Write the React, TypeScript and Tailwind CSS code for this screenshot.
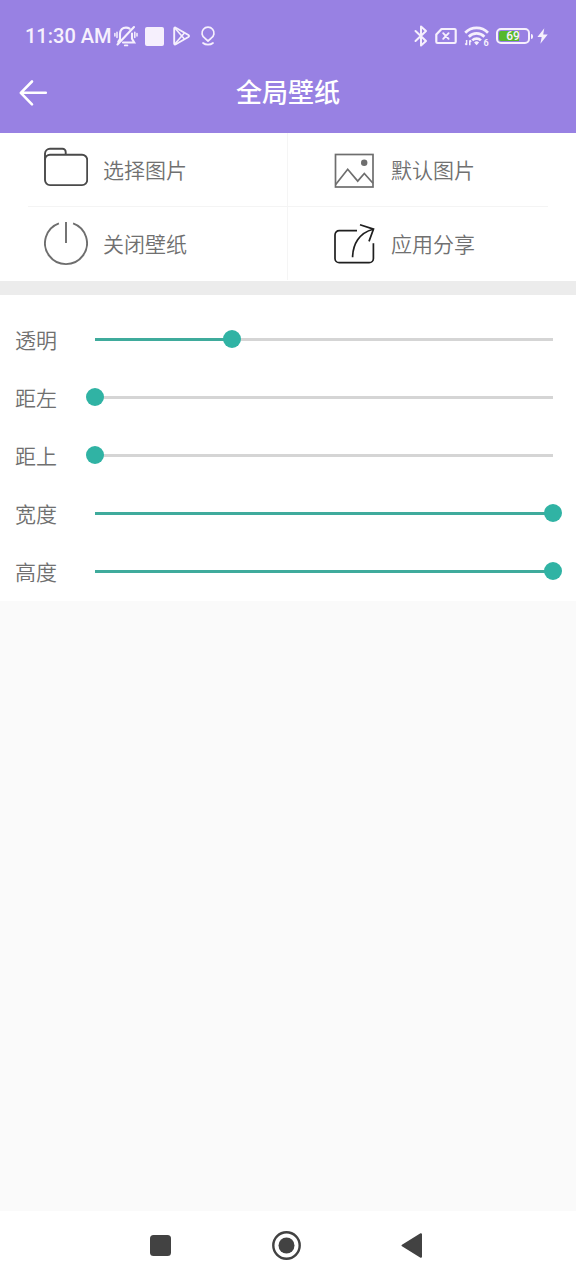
import { useState } from "react";
import type { ReactNode } from "react";

const FONT = "font-['Noto_Sans_CJK_SC','Noto_Sans',sans-serif]";

function StatusBar() {
  return (
    <div className="flex h-[53px] items-center justify-between pt-[19px] pr-7 pl-[25px] text-[#f6f0fd]">
      <div className="flex items-center">
        <span className="mr-[3px] font-[Roboto,sans-serif] text-[20px] leading-6 font-medium">11:30 AM</span>
        <svg width="24" height="24" viewBox="0 0 24 24" fill="none" stroke="currentColor" strokeWidth="2.100" strokeLinecap="round" aria-hidden="true">
          <path d="M6 15.500V10c0-4 2.400-6.400 6-6.400 1.400 0 2.600.4 3.600 1.100M18 9.500v5.300l2.200 3.700H9M5.800 15.400l-1.600 2.400" />
          <path d="M3.500 20.500L20 3" />
          <path d="M10.800 21.400h2.600" strokeWidth="1.800" />
          <path d="M3 8.200v5.200M.9 9.500v2.600M20.800 8.200v5.200M23 9.500v2.600" strokeWidth="1.500" />
        </svg>
        <span className="ml-[7px] block size-[19px] rounded-[2px] bg-[#f6f0fd]" />
        <svg className="ml-[9px]" width="17" height="20" viewBox="0 0 17 20" fill="none" stroke="currentColor" strokeWidth="1.900" strokeLinejoin="round" aria-hidden="true">
          <path d="M1.200 2.600v14.800c0 1 .8 1.400 1.600.9l12.600-7.300c.8-.5.8-1.500 0-2L2.800 1.700c-.8-.5-1.600 0-1.600.9z" />
          <path d="M1.600 1.800l9.800 11.200M1.600 18.200l9.800-11.200" strokeWidth="1.600" />
        </svg>
        <svg className="ml-[10px]" width="16" height="20" viewBox="0 0 16 20" fill="none" stroke="currentColor" strokeWidth="1.700" strokeLinecap="round" strokeLinejoin="round" aria-hidden="true">
          <path d="M8 15l-3-2.700a6 6 0 1 1 6 0z" />
          <path d="M3 17c1.400 1.200 3 1.700 5 1.700s3.600-.5 5-1.700" />
        </svg>
      </div>
      <div className="flex items-center">
        <svg width="14" height="22" viewBox="0 0 14 22" fill="none" stroke="currentColor" strokeWidth="2" strokeLinejoin="round" strokeLinecap="round" aria-hidden="true">
          <path d="M1.500 6l10.500 10-5 4.500v-19L12 6 1.500 16" />
        </svg>
        <svg className="ml-[7px]" width="22" height="18" viewBox="0 0 22 18" fill="none" stroke="currentColor" strokeWidth="2.200" strokeLinejoin="round" strokeLinecap="round" aria-hidden="true">
          <path d="M6.500 2H19.500a1.200 1.200 0 0 1 1.200 1.200v11.600a1.200 1.200 0 0 1-1.200 1.200H2.500a1.200 1.200 0 0 1-1.200-1.200V7.500z" />
          <path d="M8.200 6.200l5.400 5.600M13.600 6.200l-5.400 5.600" strokeWidth="1.900" />
        </svg>
        <svg className="ml-[7px]" width="26" height="22" viewBox="0 0 26 22" fill="none" stroke="currentColor" strokeWidth="2.700" aria-hidden="true">
          <path d="M1.200 7.700a16 16 0 0 1 22.800 0" />
          <path d="M4.800 11.700a11 11 0 0 1 15.600 0" />
          <path d="M8.300 15.400a6 6 0 0 1 8.600 0" />
          <path d="M12.600 20.200l-2.500-2.700a3.500 3.500 0 0 1 5 0z" fill="currentColor" stroke="none" />
          <path d="M2.600 15v5M1.200 18.500l1.400 1.500M5.800 20.300v-5M7.200 16.800l-1.400-1.500" strokeWidth="1.500" />
          <text x="19.500" y="21" fill="currentColor" stroke="none" fontSize="9" fontWeight="700" fontFamily="Roboto, sans-serif">6</text>
        </svg>
        <div className="ml-[6px] flex items-center gap-px">
          <div className="flex h-4 w-[34px] items-center justify-center rounded-[5px] border-2 border-current bg-linear-to-r from-[#56b82c] from-69% to-transparent to-69% bg-clip-content p-px">
            <span className="font-[Roboto,sans-serif] text-[12px] leading-3 font-medium">69</span>
          </div>
          <span className="block h-[5px] w-[2px] rounded-r-[2px] bg-current" />
        </div>
        <svg className="ml-1" width="11" height="16" viewBox="0 0 11 16" fill="currentColor" aria-hidden="true">
          <path d="M7.300.3L.4 9h4.300L3.400 15.700 10.700 6.600H6.200z" />
        </svg>
      </div>
    </div>
  );
}

function Header() {
  return (
    <header className="bg-[#9881e3]">
      <StatusBar />
      <div className="grid h-20 grid-cols-[64px_1fr_64px] items-center">
        <button type="button" aria-label="返回" className="flex h-12 items-center pl-[18px] text-white">
          <svg width="30" height="28" viewBox="0 0 30 28" fill="none" stroke="currentColor" strokeWidth="2.600" strokeLinecap="round" strokeLinejoin="round" aria-hidden="true">
            <path d="M14 2.500L2.800 13.800 14 25.300M3.500 13.800H27.800" />
          </svg>
        </button>
        <h1 className="pb-1 text-center text-[26px] leading-9 font-medium text-white">全局壁纸</h1>
      </div>
    </header>
  );
}

function FolderIcon() {
  return (
    <g stroke="#4a4a4a" strokeWidth="1.900">
      <path d="M1 13V6.500a5 5 0 0 1 5-4.700h12.500a3.200 3.200 0 0 1 3.200 3.200v2.700" />
      <path d="M1 12.700a5 5 0 0 1 5-5h32a5.200 5.200 0 0 1 5.200 5.200v20a5.200 5.200 0 0 1-5.200 5.200H6a5 5 0 0 1-5-5z" />
    </g>
  );
}

function PictureIcon() {
  return (
    <g stroke="#6e6e6e" strokeWidth="1.700">
      <rect x="3.500" y="7.500" width="37.500" height="32.500" />
      <path d="M3.700 37.500L15.700 22.300l10 11.800 6.600-7.600L41 36.300" />
      <circle cx="32.200" cy="15.800" r="3.200" fill="#6e6e6e" stroke="none" />
    </g>
  );
}

function PowerIcon() {
  return (
    <g stroke="#6e6e6e" strokeWidth="1.900">
      <path d="M14.900 2.400a21 21 0 1 0 14.200 0" />
      <path d="M22 1v21" />
    </g>
  );
}

function ShareIcon() {
  return (
    <g stroke="#1f1f1f" strokeWidth="1.700">
      <path d="M25 9.700H7.200A4.200 4.200 0 0 0 3 13.900v23.600a4.200 4.200 0 0 0 4.200 4.200h30a4.200 4.200 0 0 0 4.200-4.200V22.300" />
      <path d="M20.600 36.300C20.800 23.500 27 11.800 41.300 8.200" />
      <path d="M28 3.800l13.500 4.300L37 20.400" />
    </g>
  );
}

function ActionButton({ label, children }: { label: string; children: ReactNode }) {
  return (
    <button type="button" className="flex h-[73px] items-center gap-[15px] pl-[44px] text-[21px] leading-8 font-[350] text-[#707070]">
      <svg width="44" height="45" viewBox="0 0 44 45" fill="none" aria-hidden="true">
        {children}
      </svg>
      <span className="pb-px">{label}</span>
    </button>
  );
}

function Actions() {
  return (
    <section className="bg-white">
      <div className="grid grid-cols-2 divide-x divide-[#f5f5f5]">
        <ActionButton label="选择图片"><FolderIcon /></ActionButton>
        <ActionButton label="默认图片"><PictureIcon /></ActionButton>
      </div>
      <hr className="mx-7 border-[#f4f4f4]" />
      <div className="grid grid-cols-2 divide-x divide-[#f5f5f5] pb-px">
        <ActionButton label="关闭壁纸"><PowerIcon /></ActionButton>
        <ActionButton label="应用分享"><ShareIcon /></ActionButton>
      </div>
    </section>
  );
}

function SliderRow({ id, label, initial }: { id: string; label: string; initial: number }) {
  const [value, setValue] = useState(initial);
  const stop = `calc(9px + (100% - 18px) * ${value / 100})`;
  return (
    <div className="flex h-[58px] items-center pr-[14px] pl-[15px]">
      <label htmlFor={id} className="w-[71px] shrink-0 text-[21px] leading-8 font-[350] text-[#707070]">
        {label}
      </label>
      <input
        id={id}
        type="range"
        min={0}
        max={100}
        value={value}
        onChange={(e) => setValue(Number(e.target.value))}
        className="m-0 h-[18px] min-w-0 flex-1 cursor-pointer appearance-none bg-transparent bg-[length:100%_3px] bg-center bg-no-repeat [&::-webkit-slider-thumb]:size-[18px] [&::-webkit-slider-thumb]:appearance-none [&::-webkit-slider-thumb]:rounded-full [&::-webkit-slider-thumb]:bg-[#30b3a4]"
        style={{
          backgroundImage: `linear-gradient(to right, transparent 9px, #3fab9c 9px, #3fab9c ${stop}, #d5d5d5 ${stop}, #d5d5d5 calc(100% - 9px), transparent calc(100% - 9px))`,
        }}
      />
    </div>
  );
}

const SLIDERS = [
  { id: "opacity", label: "透明", initial: 30 },
  { id: "left", label: "距左", initial: 0 },
  { id: "top", label: "距上", initial: 0 },
  { id: "width", label: "宽度", initial: 100 },
  { id: "height", label: "高度", initial: 100 },
];

function NavBar() {
  return (
    <nav className="flex h-[69px] items-center justify-center gap-[97px] bg-white pr-1 text-[#424242]">
      <button type="button" aria-label="最近任务">
        <svg width="29" height="29" viewBox="0 0 29 29" fill="currentColor" aria-hidden="true">
          <rect x="4" y="4" width="21" height="21" rx="3.500" />
        </svg>
      </button>
      <button type="button" aria-label="主屏幕">
        <svg width="29" height="29" viewBox="0 0 29 29" fill="currentColor" aria-hidden="true">
          <circle cx="14.500" cy="14.500" r="13.200" fill="none" stroke="currentColor" strokeWidth="2.400" />
          <circle cx="14.500" cy="14.500" r="8" />
        </svg>
      </button>
      <button type="button" aria-label="返回上一页">
        <svg width="29" height="29" viewBox="0 0 29 29" fill="currentColor" stroke="currentColor" strokeWidth="2" strokeLinejoin="round" aria-hidden="true">
          <path d="M4.500 14.500L23 3.200v22.600z" />
        </svg>
      </button>
    </nav>
  );
}

export default function App() {
  return (
    <div className={`flex min-h-screen flex-col bg-[#fafafa] ${FONT}`}>
      <Header />
      <main className="flex-1">
        <Actions />
        <section className="border-t-[14px] border-[#ececec] bg-white pt-[15px] pb-px">
          {SLIDERS.map((s) => (
            <SliderRow key={s.id} {...s} />
          ))}
        </section>
      </main>
      <NavBar />
    </div>
  );
}
